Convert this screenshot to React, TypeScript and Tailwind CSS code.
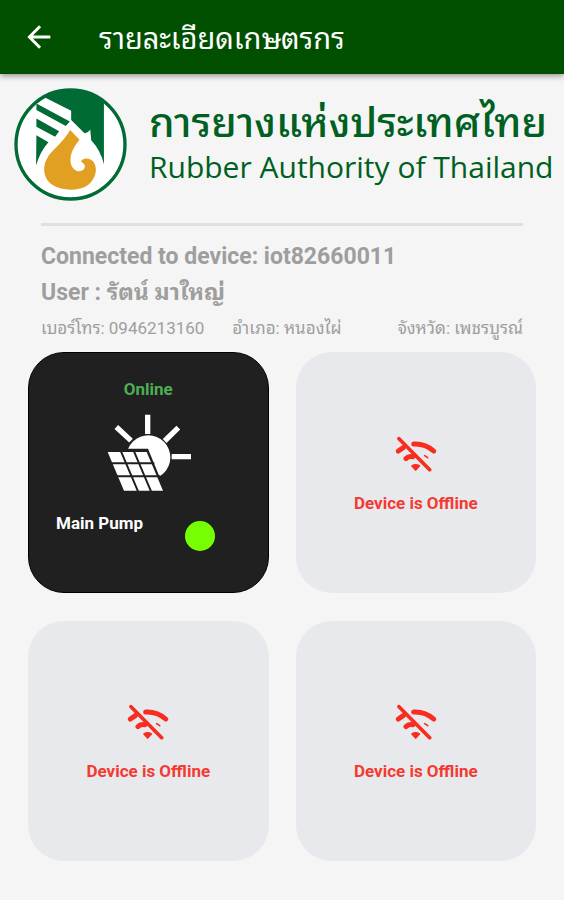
const THAI = "font-[Roboto,'Noto_Sans_Thai_Looped','Noto_Looped_Thai',Loma,Garuda,Waree,'Noto_Sans_Thai','Noto_Sans',sans-serif]";

function AuthorityLogo() {
  return (
    <svg viewBox="31 24 338 338" className="size-[113px] shrink-0" aria-hidden="true">
      <defs>
        <clipPath id="disc">
          <circle cx="200" cy="193" r="164" />
        </clipPath>
      </defs>
      <circle cx="200" cy="193" r="163" fill="#fff" />
      <g clipPath="url(#disc)">
        <path fill="#006b35" d="M98 24H300V252Q290 210 262 180L259 148Q253 158 242 159L202 120V92L122 52L98 68Z" />
        <path fill="#006b35" d="M98 70L198 124L186 138L98 90ZM98 115L166 153L154 170L98 140ZM98 165L134 186Q108 215 97 256Z" />
        <path
          fill="#e2a023"
          d="M199 150L227 179C211 199 199 219 200 242C201 267 224 281 239 268C248 258 240 249 231 244C238 231 260 232 270 247C285 272 270 304 247 318C222 332 174 332 149 316C120 299 114 263 129 236C143 210 174 192 199 150Z"
        />
      </g>
      <circle cx="200" cy="193" r="163" fill="none" stroke="#006b35" strokeWidth="10" />
    </svg>
  );
}

function SolarIcon() {
  return (
    <svg viewBox="20 25 258 240" className="h-20 w-[86px]" aria-hidden="true">
      <g stroke="#fff" strokeWidth="16">
        <path d="M142 30V88M48 67L92 108M234 69L193 109M214 156H272" />
      </g>
      <circle cx="144" cy="158" r="66" fill="#fff" />
      <path d="M10 132H143L198 266H64Z" fill="#202020" />
      <path d="M22 142H139L188 258H71Z" fill="#fff" />
      <path d="M30 176H162M48 215H180M62 140L113 260M101 140L152 260" stroke="#202020" strokeWidth="6" />
    </svg>
  );
}

function OfflineIcon() {
  return (
    <svg viewBox="168 45 126 108" className="h-9 w-[42px]" fill="none" stroke="#f92c20" strokeLinecap="round" aria-hidden="true">
      <path d="M180 53L272 146" strokeWidth="11" />
      <path d="M178 90L193 80M201 113Q208 105 222 107" strokeWidth="15" />
      <path d="M224 69Q258 67 284 90" strokeWidth="15" />
      <path d="M257 104L266 110" strokeWidth="5" />
      <path d="M219 135Q230 128 241 135L230 147Z" fill="#f92c20" strokeWidth="5" strokeLinejoin="round" />
    </svg>
  );
}

function OfflineCard() {
  return (
    <section className="flex aspect-square flex-col items-center justify-center gap-[21px] rounded-[36px] bg-[#e7e9ec] pt-1">
      <OfflineIcon />
      <p className="text-[17px] leading-5 font-bold text-[#f43a32]">Device is Offline</p>
    </section>
  );
}

export default function App() {
  return (
    <div className={`min-h-screen bg-[#f5f5f5] ${THAI}`}>
      <header className="flex h-[74px] items-center gap-11 bg-[#005000] px-[23px] text-white shadow-[0_2px_6px_rgba(0,0,0,0.4)]">
        <button type="button" aria-label="Back" className="size-8 shrink-0">
          <svg viewBox="0 0 24 24" className="size-8" fill="none" stroke="currentColor" strokeWidth="2.2" aria-hidden="true">
            <path d="M20.5 12H5M12.8 4L4.8 12L12.8 20" />
          </svg>
        </button>
        <h1 className="pt-1 text-[29px] leading-9">รายละเอียดเกษตรกร</h1>
      </header>
      <main>
        <div className="flex items-center gap-[22px] px-3.5 pt-3.5 text-[#006022]">
          <AuthorityLogo />
          <div className="pb-3 whitespace-nowrap">
            <p className="text-[41px] leading-[56px] font-medium">การยางแห่งประเทศไทย</p>
            <p className="font-['Open_Sans',sans-serif] text-[30px] leading-8">Rubber Authority of Thailand</p>
          </div>
        </div>
        <div className="mx-[41px] mt-[22px] border-t-3 border-[#e0e0e0] pt-[15px] text-[#9e9e9e]">
          <p className="text-[23px] leading-8 font-bold">Connected to device: iot82660011</p>
          <p className="mt-1 text-[23px] leading-8 font-bold">User : รัตน์ มาใหญ่</p>
          <div className="mt-[7px] flex text-[17px] leading-6 whitespace-nowrap">
            <span>เบอร์โทร: 0946213160</span>
            <span className="ml-7">อำเภอ: หนองไผ่</span>
            <span className="ml-auto">จังหวัด: เพชรบูรณ์</span>
          </div>
        </div>
        <div className="grid grid-cols-2 gap-x-[27px] gap-y-7 px-[28px] pt-3 pb-9">
          <section className="flex aspect-square flex-col items-center rounded-[36px] border border-black bg-[#202020] pt-6">
            <p className="text-[17px] leading-6 font-bold text-[#4caf50]">Online</p>
            <div className="mt-3 pl-1">
              <SolarIcon />
            </div>
            <div className="mt-5 flex w-full justify-between pr-[53px] pl-[27px]">
              <p className="text-[17px] leading-5 font-bold text-white">Main Pump</p>
              <span className="mt-2 size-[30px] rounded-full bg-[#76ff03]" />
            </div>
          </section>
          <OfflineCard />
          <OfflineCard />
          <OfflineCard />
        </div>
      </main>
    </div>
  );
}
